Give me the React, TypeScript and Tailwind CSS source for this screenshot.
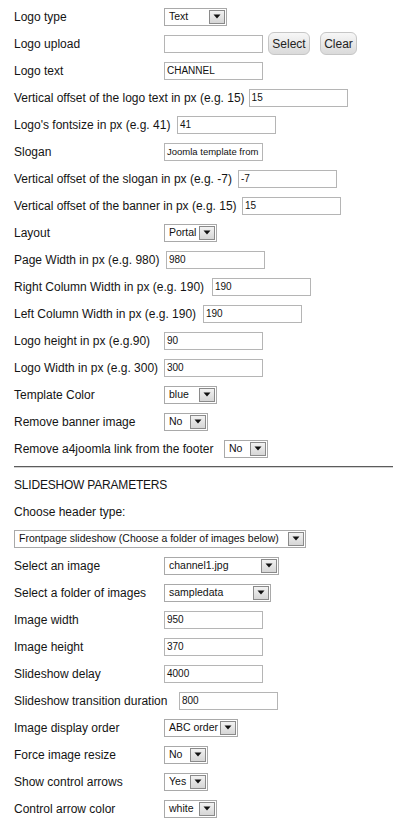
import React from 'react';

type SelectProps = { value: string; className: string };

function Arrow() {
  return (
    <span className="w-[16px] h-[14px] mr-[1px] border border-[#8a8a8a] bg-gradient-to-b from-[#f2f2f2] to-[#d6d6d6] flex items-center justify-center shrink-0">
      <svg width="8" height="5" viewBox="0 0 8 5">
        <path d="M0.5 0.5H7.5L4 4.5Z" fill="#111" />
      </svg>
    </span>
  );
}

function Select({ value, className }: SelectProps) {
  return (
    <div className={`h-[18px] border border-[#a9a9a9] bg-white flex items-center shrink-0 ${className}`}>
      <span className="flex-1 pl-[4px] text-[10.5px] text-[#111] whitespace-nowrap overflow-hidden leading-none">{value}</span>
      <Arrow />
    </div>
  );
}

function Input({ value, className, small }: { value: string; className: string; small?: boolean }) {
  return (
    <div className={`h-[18px] border border-[#b5b5b5] bg-white flex items-center shrink-0 overflow-hidden ${className}`}>
      <span className={`pl-[2px] text-[#111] whitespace-nowrap leading-none ${small ? 'text-[9.5px]' : 'text-[10px]'}`}>{value}</span>
    </div>
  );
}

function Btn({ label, className }: { label: string; className: string }) {
  return (
    <div className={`h-[23px] rounded-[6px] border border-[#c6c6c6] bg-gradient-to-b from-[#f7f7f7] to-[#dadada] flex items-center justify-center text-[12px] text-[#222] shrink-0 ${className}`}>
      {label}
    </div>
  );
}

// label column is 146px + 4px gap, longer labels push the control right
function Row({ label, w = 'min-w-[146px]', children }: { label: string; w?: string; children: React.ReactNode }) {
  return (
    <div className="h-[27px] flex items-center">
      <span className={`${w} mr-[4px] whitespace-nowrap text-[12px] text-[#141414]`}>{label}</span>
      {children}
    </div>
  );
}

export default function App() {
  return (
    <div className="w-[393px] h-[834px] bg-white pl-[14px] pt-[3px] overflow-hidden" style={{ fontFamily: '"Liberation Sans", Arial, sans-serif' }}>
      {/* Template parameters */}
      <Row label="Logo type"><Select value="Text" className="w-[63px]" /></Row>
      <Row label="Logo upload">
        <Input value="" className="w-[99px]" />
        <Btn label="Select" className="w-[42px] ml-[5px]" />
        <Btn label="Clear" className="w-[37px] ml-[10px]" />
      </Row>
      <Row label="Logo text"><Input value="CHANNEL" className="w-[99px]" /></Row>
      <Row label="Vertical offset of the logo text in px (e.g. 15)" w="min-w-[230px]"><Input value="15" className="w-[99px]" /></Row>
      <Row label="Logo's fontsize in px (e.g. 41)" w="min-w-[159px]"><Input value="41" className="w-[99px]" /></Row>
      <Row label="Slogan"><Input value="Joomla template from" className="w-[99px]" small /></Row>
      <Row label="Vertical offset of the slogan in px (e.g. -7)" w="min-w-[220px]"><Input value="-7" className="w-[99px]" /></Row>
      <Row label="Vertical offset of the banner in px (e.g. 15)" w="min-w-[224px]"><Input value="15" className="w-[99px]" /></Row>
      <Row label="Layout"><Select value="Portal" className="w-[53px]" /></Row>
      <Row label="Page Width in px (e.g. 980)" w="min-w-[148px]"><Input value="980" className="w-[99px]" /></Row>
      <Row label="Right Column Width in px (e.g. 190)" w="min-w-[194px]"><Input value="190" className="w-[99px]" /></Row>
      <Row label="Left Column Width in px (e.g. 190)" w="min-w-[185px]"><Input value="190" className="w-[99px]" /></Row>
      <Row label="Logo height in px (e.g.90)"><Input value="90" className="w-[99px]" /></Row>
      <Row label="Logo Width in px (e.g. 300)"><Input value="300" className="w-[99px]" /></Row>
      <Row label="Template Color"><Select value="blue" className="w-[53px]" /></Row>
      <Row label="Remove banner image"><Select value="No" className="w-[44px]" /></Row>
      <Row label="Remove a4joomla link from the footer" w="min-w-[206px]"><Select value="No" className="w-[44px]" /></Row>

      <div className="mt-[4px] mb-[3px] border-t border-t-[#5c5c5c] border-b border-b-[#d2d2d2]" />

      {/* Slideshow parameters */}
      <div className="h-[27px] flex items-center text-[12px] text-[#141414] tracking-[-0.2px]">SLIDESHOW PARAMETERS</div>
      <div className="h-[27px] flex items-center text-[12px] text-[#141414]">Choose header type:</div>
      <div className="h-[27px] flex items-center">
        <Select value="Frontpage slideshow (Choose a folder of images below)" className="w-[292px]" />
      </div>
      <Row label="Select an image"><Select value="channel1.jpg" className="w-[115px]" /></Row>
      <Row label="Select a folder of images"><Select value="sampledata" className="w-[107px]" /></Row>
      <Row label="Image width"><Input value="950" className="w-[99px]" /></Row>
      <Row label="Image height"><Input value="370" className="w-[99px]" /></Row>
      <Row label="Slideshow delay"><Input value="4000" className="w-[99px]" /></Row>
      <Row label="Slideshow transition duration" w="min-w-[161px]"><Input value="800" className="w-[99px]" /></Row>
      <Row label="Image display order"><Select value="ABC order" className="w-[74px]" /></Row>
      <Row label="Force image resize"><Select value="No" className="w-[44px]" /></Row>
      <Row label="Show control arrows"><Select value="Yes" className="w-[44px]" /></Row>
      <Row label="Control arrow color"><Select value="white" className="w-[53px]" /></Row>
    </div>
  );
}
